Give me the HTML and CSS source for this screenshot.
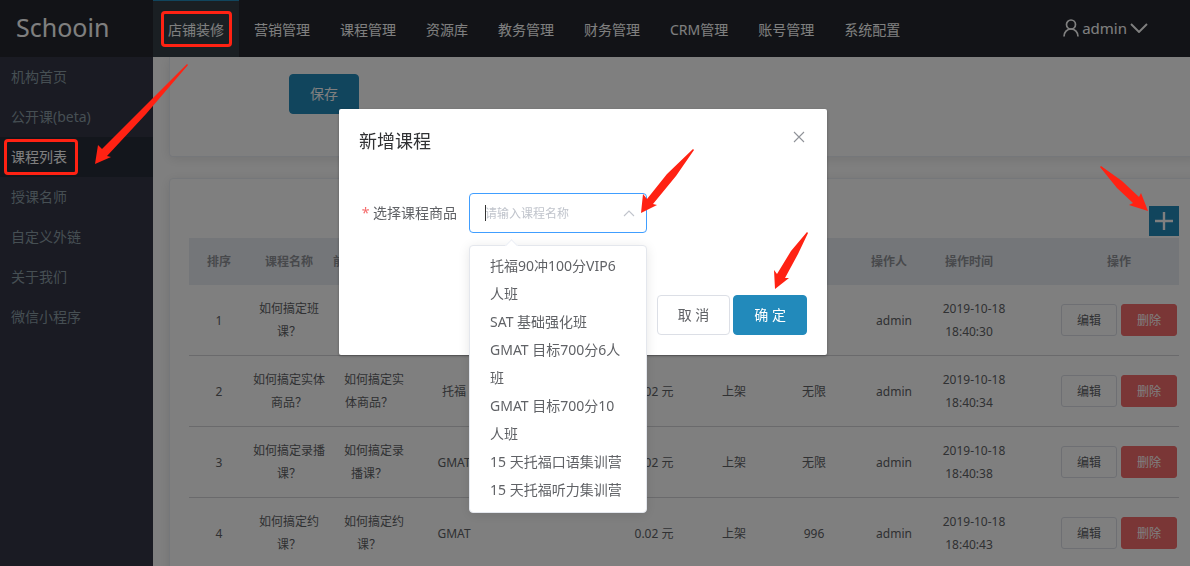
FILE: index.html
```html
<!DOCTYPE html>
<html lang="zh-CN">
<head>
<meta charset="utf-8">
<title>Schooin</title>
<link rel="stylesheet" href="styles.css">
</head>
<body>
<div class="app">
  <header class="topbar">
    <div class="logo">Schooin</div>
    <nav class="topnav">
      <a class="topnav-item is-active" href="#"><span class="marked">店铺装修</span></a>
      <a class="topnav-item" href="#">营销管理</a>
      <a class="topnav-item" href="#">课程管理</a>
      <a class="topnav-item" href="#">资源库</a>
      <a class="topnav-item" href="#">教务管理</a>
      <a class="topnav-item" href="#">财务管理</a>
      <a class="topnav-item" href="#">CRM管理</a>
      <a class="topnav-item" href="#">账号管理</a>
      <a class="topnav-item" href="#">系统配置</a>
    </nav>
    <button class="user" type="button">
      <svg width="16" height="18" viewBox="0 0 16 18" fill="none" stroke="currentColor" stroke-width="1.7"><circle cx="8" cy="5.5" r="4.5"/><path d="M1 17.5C1 13 4 10 8 10s7 3 7 7.500"/></svg>
      <span>admin</span>
      <svg width="18" height="10" viewBox="0 0 18 10" fill="none" stroke="currentColor" stroke-width="1.9"><path d="M1 1l8 8 8-8"/></svg>
    </button>
  </header>

  <div class="body">
    <nav class="sidebar">
      <a class="side-item" href="#">机构首页</a>
      <a class="side-item" href="#">公开课(beta)</a>
      <a class="side-item is-active" href="#"><span class="marked">课程列表</span></a>
      <a class="side-item" href="#">授课名师</a>
      <a class="side-item" href="#">自定义外链</a>
      <a class="side-item" href="#">关于我们</a>
      <a class="side-item" href="#">微信小程序</a>
    </nav>

    <main class="content">
      <section class="card form-card">
        <button class="btn btn-primary" type="button">保存</button>
      </section>

      <section class="card list-card">
        <div class="toolbar">
          <button class="add" type="button" aria-label="新增">
            <svg width="20" height="20" viewBox="0 0 20 20" stroke="currentColor" stroke-width="2.4"><path d="M10 1v18M1 10h18"/></svg>
          </button>
        </div>
        <table class="courses">
          <colgroup>
            <col class="w60"><col class="w80"><col class="w80"><col class="w80"><col>
            <col class="w80"><col class="w80"><col class="w80"><col class="w80"><col class="w80"><col class="w170">
          </colgroup>
          <thead>
            <tr><th>排序</th><th>课程名称</th><th class="nowrap">前端显示名称</th><th></th><th></th><th></th><th></th><th></th><th>操作人</th><th>操作时间</th><th class="actions">操作</th></tr>
          </thead>
          <tbody>
            <tr><td>1</td><td>如何搞定班课？</td><td></td><td></td><td></td><td></td><td></td><td></td><td><span>admin</span></td><td><span>2019-10-18 18:40:30</span></td><td class="actions"><button class="btn btn-small" type="button">编辑</button><button class="btn btn-small btn-danger" type="button">删除</button></td></tr>
            <tr><td>2</td><td>如何搞定实体商品？</td><td><span>如何搞定实体商品？</span></td><td><span>托福</span></td><td></td><td><span>0.02 元</span></td><td><span>上架</span></td><td><span>无限</span></td><td><span>admin</span></td><td><span>2019-10-18 18:40:34</span></td><td class="actions"><button class="btn btn-small" type="button">编辑</button><button class="btn btn-small btn-danger" type="button">删除</button></td></tr>
            <tr><td>3</td><td>如何搞定录播课？</td><td><span>如何搞定录播课？</span></td><td><span>GMAT</span></td><td></td><td><span>0.02 元</span></td><td><span>上架</span></td><td><span>无限</span></td><td><span>admin</span></td><td><span>2019-10-18 18:40:38</span></td><td class="actions"><button class="btn btn-small" type="button">编辑</button><button class="btn btn-small btn-danger" type="button">删除</button></td></tr>
            <tr><td>4</td><td>如何搞定约课？</td><td><span>如何搞定约课？</span></td><td><span>GMAT</span></td><td></td><td><span>0.02 元</span></td><td><span>上架</span></td><td><span>996</span></td><td><span>admin</span></td><td><span>2019-10-18 18:40:43</span></td><td class="actions"><button class="btn btn-small" type="button">编辑</button><button class="btn btn-small btn-danger" type="button">删除</button></td></tr>
          </tbody>
        </table>
      </section>
    </main>
  </div>
</div>

<div class="overlay">
  <div class="dialog" role="dialog" aria-labelledby="dialog-title">
    <div class="dialog-head">
      <h2 id="dialog-title">新增课程</h2>
      <button class="close" type="button" aria-label="关闭">
        <svg width="12" height="12" viewBox="0 0 12 12" stroke="currentColor" stroke-width="1.1"><path d="M1 1l10 10M11 1L1 11"/></svg>
      </button>
    </div>
    <div class="field">
      <label for="course"><span class="required">*</span> 选择课程商品</label>
      <div class="select">
        <span class="caret"></span>
        <input id="course" type="text" placeholder="请输入课程名称">
        <svg class="chevron" width="12" height="8" viewBox="0 0 12 8" fill="none" stroke="currentColor" stroke-width="1.1"><path d="M1 7l5-5 5 5"/></svg>
        <ul class="options">
          <li>托福90冲100分VIP6人班</li>
          <li>SAT 基础强化班</li>
          <li>GMAT 目标700分6人班</li>
          <li>GMAT 目标700分10人班</li>
          <li>15 天托福口语集训营</li>
          <li>15 天托福听力集训营</li>
        </ul>
      </div>
    </div>
    <div class="dialog-foot">
      <button class="btn" type="button">取 消</button>
      <button class="btn btn-primary" type="button">确 定</button>
    </div>
  </div>
</div>

<svg class="arrows" width="1190" height="566" viewBox="0 0 1190 566" fill="#ff2213">
  <path d="M187 64L188 65L146 114L107 156L111 157L95 164L98 145L102 149L140 111Z"/>
  <path d="M693 149L694 150L676 176L653 204L657 205L641 213L643 194L647 199L667 174Z"/>
  <path d="M807 232L808 233L798 254L785 278L789 278L775 289L774 270L777 274L791 251Z"/>
  <path d="M1100 167L1101 166L1122 181L1139 197L1141 193L1148 211L1129 205L1133 203L1117 188Z"/>
</svg>
</body>
</html>
```
FILE: styles.css
```css
* {
  box-sizing: border-box;
}

body {
  margin: 0;
  height: 100vh;
  overflow: hidden;
  background: #fff;
  color: #606266;
  font: 14px/20px "Noto Sans", "Noto Sans CJK SC", sans-serif;
}

a {
  color: inherit;
  text-decoration: none;
}

button,
input {
  font: inherit;
}

.app {
  display: flex;
  flex-direction: column;
  height: 100vh;
}

/* Top bar */
.topbar {
  display: flex;
  flex: none;
  height: 57px;
  background: #24272e;
  color: #fff;
}

.logo {
  width: 153px;
  padding-left: 16px;
  font-size: 25px;
  line-height: 54px;
}

.topnav {
  display: flex;
  flex: 1;
}

.topnav-item {
  padding: 0 15px;
  border-top: 1px solid transparent;
  line-height: 58px;
  white-space: nowrap;
}

.topnav-item.is-active {
  border-top-color: #228abb;
  background: #343e46;
}

.user {
  display: flex;
  align-items: center;
  gap: 3px;
  height: 55px;
  margin-right: 42px;
  padding: 0;
  border: 0;
  background: none;
  color: #fff;
  font-size: 15px;
}

/* Side menu */
.body {
  display: flex;
  flex: 1;
  min-height: 0;
}

.sidebar {
  flex: none;
  width: 153px;
  background: #343646;
  color: #8c9ea6;
}

.side-item {
  display: block;
  padding-left: 11px;
  line-height: 40px;
}

.side-item.is-active {
  background: #272d38;
  color: #fff;
}

.marked {
  position: relative;
}

.marked::after {
  position: absolute;
  z-index: 3;
  inset: -9px -8px -8px -7px;
  border: 3px solid #ff2213;
  border-radius: 4px;
  content: "";
}

.side-item .marked::after {
  inset: -8px -11px -9px -7px;
}

/* Content */
.content {
  flex: 1;
  min-width: 0;
  padding-left: 16px;
  overflow: hidden;
}

.card {
  margin-right: -9px;
  border: 1px solid #ebeef5;
  border-radius: 4px;
  background: #fff;
  box-shadow: 0 2px 12px rgba(0, 0, 0, 0.1);
}

.form-card {
  margin-bottom: 21px;
  padding: 17px 0 42px 119px;
  border-top: 0;
  border-radius: 0 0 4px 4px;
}

.list-card {
  padding: 27px 19px 20px;
}

.toolbar {
  display: flex;
  justify-content: flex-end;
  margin-bottom: 2px;
}

.add {
  display: grid;
  place-items: center;
  width: 30px;
  height: 30px;
  padding: 0;
  border: 0;
  background: #228abb;
  color: #fff;
}

.courses {
  width: 100%;
  border-collapse: collapse;
  table-layout: fixed;
  font-size: 12px;
  line-height: 23px;
  text-align: center;
}

.w60 { width: 60px; }
.w80 { width: 80px; }
.w170 { width: 170px; }

.courses th {
  height: 47px;
  padding: 0;
  background: #e9edf2;
  color: #909399;
}

.courses .nowrap {
  white-space: nowrap;
}

.courses td {
  padding: 12px 0;
  border-bottom: 1px solid #d4d5d8;
}

.courses td span {
  margin-left: 10px;
}

.courses .actions {
  padding-left: 50px;
}

/* Buttons */
.btn {
  height: 40px;
  padding: 0 20px;
  border: 1px solid #dcdfe6;
  border-radius: 4px;
  background: #fff;
  color: #606266;
}

.btn-primary {
  border-color: #228abb;
  background: #228abb;
  color: #fff;
}

.btn-small {
  height: 32px;
  padding: 0 15px;
  border-radius: 3px;
}

.btn-small + .btn-small {
  margin-left: 4px;
}

.btn-danger {
  border-color: #f56c6c;
  background: #f56c6c;
  color: #fff;
}

/* Dialog */
.overlay {
  position: fixed;
  z-index: 1;
  inset: 0;
  display: flex;
  align-items: flex-start;
  justify-content: center;
  padding: 109px 24px 0 0;
  background: rgba(0, 0, 0, 0.5);
}

.dialog {
  width: 488px;
  padding: 20px;
  border-radius: 2px;
  background: #fff;
  box-shadow: 0 1px 3px rgba(0, 0, 0, 0.3);
}

.dialog-head {
  display: flex;
  align-items: flex-start;
  justify-content: space-between;
  margin-bottom: 40px;
}

.dialog-head h2 {
  margin: 0;
  color: #303133;
  font-size: 18px;
  font-weight: 400;
  line-height: 24px;
}

.close {
  display: grid;
  place-items: center;
  width: 16px;
  height: 16px;
  padding: 0;
  border: 0;
  background: none;
  color: #909399;
}

.field {
  display: flex;
  align-items: center;
  margin-bottom: 62px;
}

.field label {
  width: 110px;
  padding-right: 12px;
  text-align: right;
}

.required {
  color: #f56c6c;
}

.select {
  position: relative;
  width: 178px;
}

.select input {
  display: block;
  width: 100%;
  height: 40px;
  padding: 0 30px 0 15px;
  border: 1px solid #409eff;
  border-radius: 4px;
  outline: 0;
  background: #fff;
  font-size: 12px;
}

.select input::placeholder {
  color: #c0c4cc;
}

.caret {
  position: absolute;
  top: 12px;
  left: 16px;
  width: 1px;
  height: 16px;
  background: #333;
}

.chevron {
  position: absolute;
  top: 16px;
  right: 12px;
  color: #c0c4cc;
}

.options {
  position: absolute;
  top: 52px;
  left: 0;
  width: 100%;
  margin: 0;
  padding: 6px 20px 8px;
  border: 1px solid #e4e7ed;
  border-radius: 4px;
  background: #fff;
  box-shadow: 0 2px 12px rgba(0, 0, 0, 0.1);
  line-height: 28px;
  list-style: none;
}

.options::before {
  position: absolute;
  top: -5px;
  left: 37px;
  width: 8px;
  height: 8px;
  border: solid #ebeef5;
  border-width: 1px 0 0 1px;
  background: #fff;
  transform: rotate(45deg);
  content: "";
}

.dialog-foot {
  display: flex;
  justify-content: flex-end;
  gap: 3px;
}

/* Pointer arrows over the page */
.arrows {
  position: fixed;
  z-index: 4;
  top: 0;
  left: 0;
  pointer-events: none;
}
```
